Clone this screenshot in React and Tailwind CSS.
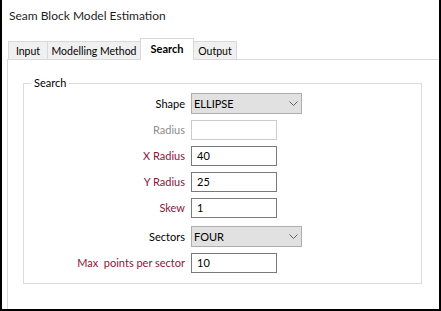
import React from "react";

function Chevron() {
  return (
    <svg width="9" height="5" viewBox="0 0 9 5" className="block">
      <path d="M0.5 0.5 L4.5 4.5 L8.5 0.5" fill="none" stroke="#606060" strokeWidth="1" />
    </svg>
  );
}

function Row({ label, labelClass, children, gapClass }) {
  return (
    <div className={`flex items-center ${gapClass}`}>
      <div className={`w-[161px] text-right text-[11px] leading-[16px] whitespace-pre ${labelClass}`}>
        {label}
      </div>
      <div className="ml-[6px]">{children}</div>
    </div>
  );
}

function Input({ value, disabled }) {
  return (
    <div
      className={`w-[86px] h-[20px] bg-white border flex items-center pl-[5px] text-[11px] leading-[16px] text-black ${
        disabled ? "border-[#cccccc]" : "border-[#7a7a7a]"
      }`}
    >
      {value}
    </div>
  );
}

function Select({ value }) {
  return (
    <div className="w-[111px] h-[21px] bg-[#e1e1e1] border border-[#adadad] flex items-center justify-between pl-[2px] pr-[3px] text-[11px] leading-[16px] text-black">
      <span>{value}</span>
      <Chevron />
    </div>
  );
}

export default function App() {
  return (
    <div className="w-[441px] h-[311px] bg-white border-x-2 border-b-2 border-black overflow-hidden flex flex-col text-black [font-family:Lato,sans-serif]">
      <div className="h-[38px] pl-[7px] pt-[8px] text-[12px] leading-[16px] text-[#1e1e1e] whitespace-nowrap">
        Seam Block Model Estimation
      </div>
      <div className="h-[21px] flex items-end pl-[6px] relative z-10 text-[10.5px] leading-[16px] whitespace-nowrap">
        <div className="w-[39px] h-[18px] border-l border-t border-[#d9d9d9] bg-[#f0f0f0] flex items-center justify-center">
          Input
        </div>
        <div className="w-[93px] h-[18px] border-l border-t border-[#d9d9d9] bg-[#f0f0f0] flex items-center justify-center">
          Modelling Method
        </div>
        <div className="w-[54px] h-[22px] mb-[-1px] border-l border-t border-r border-[#d9d9d9] bg-white flex items-center justify-center font-bold text-[11px] pb-[2px]">
          Search
        </div>
        <div className="w-[43px] h-[18px] border-t border-r border-[#d9d9d9] bg-[#f0f0f0] flex items-center justify-center">
          Output
        </div>
      </div>
      <div className="flex-1 ml-[5px] border-t border-l border-[#d9d9d9]">
        <fieldset className="ml-[15px] mt-[15px] w-[399px] border border-[#dcdcdc] pt-[2px] pb-[10px]">
          <legend className="ml-[7px] px-[3px] text-[11px] leading-[16px]">Search</legend>
          <div className="flex flex-col">
            <Row label="Shape" labelClass="text-black" gapClass="">
              <Select value="ELLIPSE" />
            </Row>
            <Row label="Radius" labelClass="text-[#8d8d8d]" gapClass="mt-[6px]">
              <Input value="" disabled />
            </Row>
            <Row label="X Radius" labelClass="text-[#8b1538]" gapClass="mt-[6px]">
              <Input value="40" />
            </Row>
            <Row label="Y Radius" labelClass="text-[#8b1538]" gapClass="mt-[6px]">
              <Input value="25" />
            </Row>
            <Row label="Skew" labelClass="text-[#8b1538]" gapClass="mt-[6px]">
              <Input value="1" />
            </Row>
            <Row label="Sectors" labelClass="text-black" gapClass="mt-[8px]">
              <Select value="FOUR" />
            </Row>
            <Row label="Max  points per sector" labelClass="text-[#8b1538]" gapClass="mt-[6px]">
              <Input value="10" />
            </Row>
          </div>
        </fieldset>
      </div>
    </div>
  );
}
